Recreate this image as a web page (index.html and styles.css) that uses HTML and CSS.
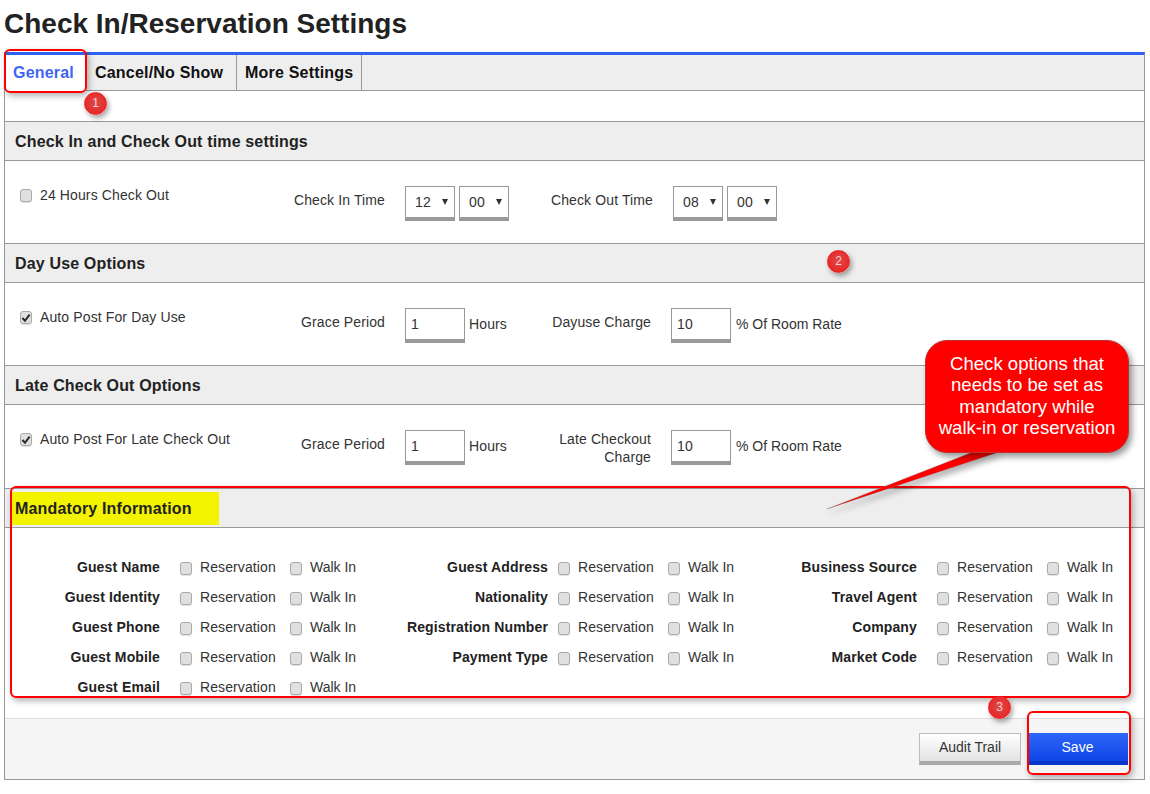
FILE: index.html
```html
<!DOCTYPE html>
<html lang="en">
<head>
<meta charset="utf-8">
<title>Check In/Reservation Settings</title>
<link rel="stylesheet" href="styles.css">
</head>
<body>
<h1 class="title">Check In/Reservation Settings</h1>
<main class="panel">
  <nav class="tabs">
    <a class="tab active">General</a>
    <a class="tab tab-cancel">Cancel/No Show</a>
    <a class="tab tab-more">More Settings</a>
  </nav>
  <div class="tab-gap"></div>

  <h2 class="section-head">Check In and Check Out time settings</h2>
  <section class="opts opts-time">
    <label class="opt"><span class="cb"></span>24 Hours Check Out</label>
    <span class="fl">Check In Time</span>
    <div class="pair">
      <span class="sel">12<i class="caret"></i></span>
      <span class="sel">00<i class="caret"></i></span>
    </div>
    <span class="fl">Check Out Time</span>
    <div class="pair">
      <span class="sel">08<i class="caret"></i></span>
      <span class="sel">00<i class="caret"></i></span>
    </div>
  </section>

  <h2 class="section-head">Day Use Options</h2>
  <section class="opts">
    <label class="opt"><span class="cb"><svg viewBox="0 0 12 12" class="tick"><path d="M2.4 6 5 8.8 9.6 2.6"/></svg></span>Auto Post For Day Use</label>
    <span class="fl">Grace Period</span>
    <div class="pair"><span class="inp">1</span><span class="unit">Hours</span></div>
    <span class="fl">Dayuse Charge</span>
    <div class="pair"><span class="inp">10</span><span class="unit unit-wide">% Of Room Rate</span></div>
  </section>

  <h2 class="section-head">Late Check Out Options</h2>
  <section class="opts opts-late">
    <label class="opt"><span class="cb"><svg viewBox="0 0 12 12" class="tick"><path d="M2.4 6 5 8.8 9.6 2.6"/></svg></span>Auto Post For Late Check Out</label>
    <span class="fl">Grace Period</span>
    <div class="pair"><span class="inp">1</span><span class="unit">Hours</span></div>
    <span class="fl fl-wrap">Late Checkout<br>Charge</span>
    <div class="pair"><span class="inp">10</span><span class="unit unit-wide">% Of Room Rate</span></div>
  </section>

  <h2 class="section-head marked">Mandatory Information</h2>
  <section class="mand">
    <div class="mand-col">
      <div class="m-row"><b>Guest Name</b><span class="cb"></span><span class="m-r">Reservation</span><span class="cb"></span><span>Walk In</span></div>
      <div class="m-row"><b>Guest Identity</b><span class="cb"></span><span class="m-r">Reservation</span><span class="cb"></span><span>Walk In</span></div>
      <div class="m-row"><b>Guest Phone</b><span class="cb"></span><span class="m-r">Reservation</span><span class="cb"></span><span>Walk In</span></div>
      <div class="m-row"><b>Guest Mobile</b><span class="cb"></span><span class="m-r">Reservation</span><span class="cb"></span><span>Walk In</span></div>
      <div class="m-row"><b>Guest Email</b><span class="cb"></span><span class="m-r">Reservation</span><span class="cb"></span><span>Walk In</span></div>
    </div>
    <div class="mand-col mand-mid">
      <div class="m-row"><b>Guest Address</b><span class="cb"></span><span class="m-r">Reservation</span><span class="cb"></span><span>Walk In</span></div>
      <div class="m-row"><b>Nationality</b><span class="cb"></span><span class="m-r">Reservation</span><span class="cb"></span><span>Walk In</span></div>
      <div class="m-row"><b>Registration Number</b><span class="cb"></span><span class="m-r">Reservation</span><span class="cb"></span><span>Walk In</span></div>
      <div class="m-row"><b>Payment Type</b><span class="cb"></span><span class="m-r">Reservation</span><span class="cb"></span><span>Walk In</span></div>
    </div>
    <div class="mand-col">
      <div class="m-row"><b>Business Source</b><span class="cb"></span><span class="m-r">Reservation</span><span class="cb"></span><span>Walk In</span></div>
      <div class="m-row"><b>Travel Agent</b><span class="cb"></span><span class="m-r">Reservation</span><span class="cb"></span><span>Walk In</span></div>
      <div class="m-row"><b>Company</b><span class="cb"></span><span class="m-r">Reservation</span><span class="cb"></span><span>Walk In</span></div>
      <div class="m-row"><b>Market Code</b><span class="cb"></span><span class="m-r">Reservation</span><span class="cb"></span><span>Walk In</span></div>
    </div>
  </section>

  <footer class="actions">
    <button class="btn btn-audit">Audit Trail</button>
    <button class="btn btn-save">Save</button>
  </footer>
</main>

<div class="ring ring-tab"></div>
<div class="ring ring-mand"></div>
<div class="ring ring-save"></div>
<div class="badge badge-1">1</div>
<div class="badge badge-2">2</div>
<div class="badge badge-3">3</div>
<svg class="tail" viewBox="0 0 190 70"><path d="M148 0 174 0 2 57 Z"/></svg>
<div class="bubble">Check options that<br>needs to be set as<br>mandatory while<br>walk-in or reservation</div>
</body>
</html>
```
FILE: styles.css
```css
* { box-sizing: border-box; }
html, body { margin: 0; padding: 0; }
body {
  width: 1150px;
  height: 794px;
  overflow: hidden;
  background: #fff;
  color: #333;
  font-family: "Liberation Sans", Arial, sans-serif;
  font-size: 14px;
  position: relative;
}
.title {
  margin: 0;
  height: 52px;
  padding: 7px 0 0 4px;
  font-size: 28px;
  line-height: 34px;
  font-weight: 700;
  color: #222;
}
.panel {
  margin-left: 4px;
  width: 1141px;
  height: 728px;
  border: 1px solid #999;
  border-top: 3px solid #2f62f3;
  display: flex;
  flex-direction: column;
}
.tabs {
  height: 36px;
  flex: none;
  display: flex;
  background: #eee;
  border-bottom: 1px solid #999;
}
.tab {
  padding: 0 8px;
  line-height: 35px;
  font-size: 16px;
  font-weight: 700;
  letter-spacing: 0.2px;
  color: #111;
  white-space: nowrap;
  border-right: 1px solid #999;
}
.tab.active {
  width: 81px;
  height: 36px;
  background: #fff;
  color: #3f66f0;
  border-right: 0;
}
.tab-cancel { width: 151px; padding-left: 9px; }
.tab-more { width: 125px; }
.tab-gap { height: 30px; flex: none; }
.section-head {
  margin: 0;
  flex: none;
  height: 40px;
  padding-left: 10px;
  background: #eee;
  border-top: 1px solid #999;
  border-bottom: 1px solid #999;
  font-size: 16px;
  line-height: 39px;
  font-weight: 700;
  letter-spacing: 0.16px;
  color: #222;
}
.marked { position: relative; z-index: 0; }
.marked::before {
  content: "";
  position: absolute;
  z-index: -1;
  left: 6px;
  top: 3px;
  width: 208px;
  height: 33px;
  background: #f3f300;
}
.opts {
  flex: none;
  height: 82px;
  display: grid;
  grid-template-columns: 236px 129px 132px 134px 1fr;
  padding: 25px 0 0 15px;
  align-items: start;
  letter-spacing: 0.12px;
}
.opts-time { grid-template-columns: 236px 129px 132px 136px 1fr; }
.opts-late { height: 83px; }
.opt { display: flex; align-items: center; gap: 8px; height: 20px; margin-top: -1px; white-space: nowrap; }
.fl { text-align: right; line-height: 20px; padding-top: 4px; }
.fl-wrap { padding-top: 0; line-height: 18px; }
.pair { display: flex; gap: 4px; padding-left: 20px; align-items: flex-start; }
.sel {
  width: 50px;
  height: 35px;
  border: 1px solid #999;
  border-bottom-width: 4px;
  display: flex;
  align-items: center;
  justify-content: space-between;
  padding: 0 6px 0 9px;
  background: #fff;
}
.caret {
  width: 0; height: 0;
  border-left: 3px solid transparent;
  border-right: 3px solid transparent;
  border-top: 6px solid #333;
}
.inp {
  width: 60px;
  height: 35px;
  padding-left: 5px;
  border: 1px solid #999;
  border-bottom-width: 4px;
  line-height: 30px;
  background: #fff;
}
.unit { line-height: 33px; white-space: nowrap; }
.unit-wide { margin-left: 1px; letter-spacing: 0; }
.cb {
  flex: none;
  width: 12px;
  height: 13px;
  border: 1px solid #aaa;
  border-radius: 3px;
  background: #e0e0e0;
  box-shadow: 0 1px 1px rgba(0,0,0,.12);
  display: inline-block;
  position: relative;
}
.tick { position: absolute; left: -1px; top: 0; width: 12px; height: 12px; }
.tick path { fill: none; stroke: #2a2a2a; stroke-width: 2; }
.mand {
  flex: none;
  height: 190px;
  display: grid;
  grid-template-columns: 388px 369px 1fr;
  padding-top: 24px;
}
.mand-col { display: flex; flex-direction: column; }
.m-row {
  height: 30px;
  display: flex;
  align-items: center;
  white-space: nowrap;
}
.m-row b { flex: none; width: 155px; text-align: right; color: #222; letter-spacing: 0.14px; }
.m-row .cb { margin-right: 8px; margin-top: 2px; }
.m-row b + .cb { margin-left: 20px; }
.mand-mid .m-row b + .cb { margin-left: 10px; }
.m-r { flex: none; width: 90px; letter-spacing: 0.1px; }
.actions {
  flex: 1;
  display: flex;
  justify-content: flex-end;
  align-items: flex-start;
  gap: 6px;
  padding: 14px 16px 0 0;
  background: #f5f5f5;
  border-top: 1px solid #ddd;
}
.btn {
  width: 101px;
  height: 32px;
  padding: 0;
  font-family: inherit;
  font-size: 14px;
}
.btn-audit {
  width: 102px;
  padding-bottom: 1px;
  border: 1px solid #bbb;
  border-bottom: 4px solid #aaa;
  background: linear-gradient(#fff, #e2e2e2);
  color: #333;
}
.btn-save {
  border: 0;
  border-bottom: 4px solid #0b36cc;
  background: linear-gradient(#2e66f7, #0f44e6);
  color: #fff;
}
.ring {
  position: absolute;
  border: 2px solid #f00;
  border-radius: 6px;
  box-shadow: 2px 3px 6px rgba(0,0,0,.3);
}
.ring-tab { left: 4px; top: 49px; width: 83px; height: 44px; }
.ring-mand { left: 10px; top: 486px; width: 1121px; height: 212px; }
.ring-save { left: 1027px; top: 711px; width: 104px; height: 64px; }
.badge {
  position: absolute;
  width: 23px; height: 23px;
  border-radius: 50%;
  background: radial-gradient(circle at 50% 45%, #dd4a4a, #e62a2a 70%, #f31c1c);
  border: 1px solid #f02020;
  color: #f7d0d0;
  font-size: 12px;
  line-height: 21px;
  text-align: center;
  box-shadow: 2px 3px 5px rgba(0,0,0,.35);
}
.badge-1 { left: 84px; top: 92px; }
.badge-2 { left: 827px; top: 250px; }
.badge-3 { left: 988px; top: 696px; }
.tail {
  position: absolute;
  left: 825px; top: 452px;
  width: 190px; height: 70px;
  overflow: visible;
  filter: drop-shadow(3px 4px 3px rgba(0,0,0,.35));
}
.tail path { fill: #f00; stroke: rgba(120,120,120,.55); stroke-width: .6; }
.bubble {
  position: absolute;
  left: 925px; top: 340px;
  width: 204px; height: 113px;
  padding: 12px 0 0;
  background: #f00;
  border-radius: 22px;
  border: 1px solid #c03030;
  box-shadow: 3px 4px 6px rgba(0,0,0,.4);
  color: #fff;
  font-size: 18.6px;
  line-height: 21.4px;
  text-align: center;
  white-space: nowrap;
}
```
